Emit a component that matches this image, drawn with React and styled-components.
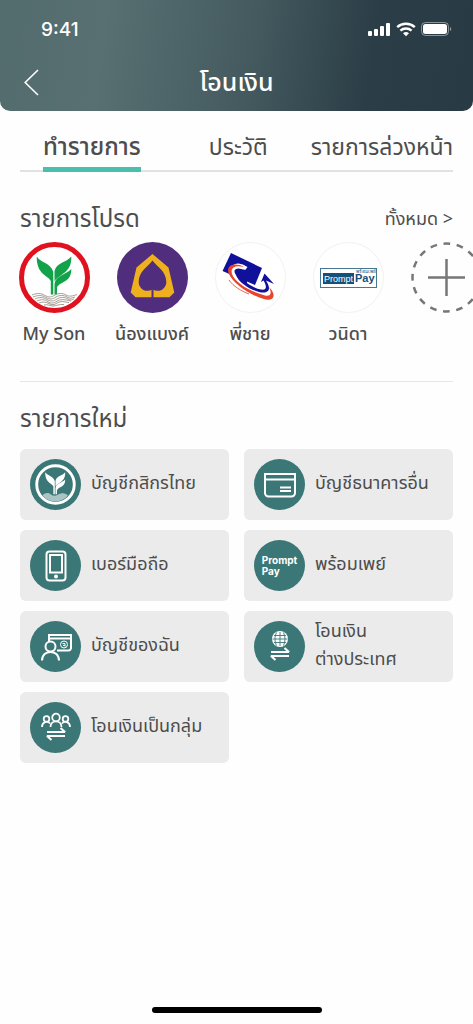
import React from 'react';
import styled, { createGlobalStyle, css } from 'styled-components';

const GlobalStyle = createGlobalStyle`
  *, *::before, *::after {
    box-sizing: border-box;
  }

  body {
    margin: 0;
    color: #4d4d4d;
    background-color: #fefefe;
    font-family: 'Noto Sans Thai', 'Noto Sans', sans-serif;
  }

  button {
    padding: 0;
    color: inherit;
    font-family: inherit;
    background: none;
    border: 0;
    cursor: pointer;
  }

  svg {
    display: block;
    flex: none;
  }
`;

const Screen = styled.div`
  display: flex;
  flex-direction: column;
  min-height: 100vh;
  overflow-x: hidden;
`;

const Header = styled.header`
  color: #fff;
  background: linear-gradient(98deg, #526b6d 0%, #587072 22%, #43595e 54%, #2b3d46 78%, #283a43 100%);
  border-radius: 0 0 10px 10px;
`;

const StatusBar = styled.div`
  display: flex;
  align-items: center;
  justify-content: space-between;
  height: 58px;
  padding: 0 20px 0 41px;
`;

const Clock = styled.time`
  font-family: Inter, sans-serif;
  font-size: 19px;
  font-weight: 500;
`;

const TitleBar = styled.div`
  display: grid;
  grid-template-columns: 1fr auto 1fr;
  align-items: center;
  height: 53px;
  padding: 0 24px 4px;
`;

const Title = styled.h1`
  margin: 0;
  font-size: 25px;
  font-weight: 500;
  line-height: 32px;
`;

const Main = styled.main`
  flex: 1;
  padding: 20px 20px 0;
`;

const Tabs = styled.nav`
  display: flex;
  gap: 43px;
  height: 41px;
  padding-left: 23px;
  border-bottom: 2px solid #e2e2e2;
`;

const Tab = styled.button`
  height: 41px;
  padding-bottom: 3px;
  font-size: 23px;
  line-height: 32px;
  white-space: nowrap;
  border-bottom: 5px solid transparent;

  ${({ $active }) => $active && css`
    margin-right: auto;
    font-size: 24px;
    font-weight: 500;
    border-color: #4bbfae;
  `}
`;

const SectionHead = styled.div`
  display: flex;
  align-items: center;
  justify-content: space-between;
  height: 32px;
`;

const SectionTitle = styled.h2`
  margin: 0;
  font-size: 24px;
  font-weight: 400;
  line-height: 32px;
`;

const AllButton = styled.button`
  font-size: 18px;
  line-height: 32px;
`;

const Favorites = styled.section`
  padding: 32px 0 32px;
  border-bottom: 1px solid #e6e6e6;
`;

const FavoriteRow = styled.div`
  display: flex;
  gap: 18px;
  margin: 6px -20px 0 -6px;
  overflow: hidden;
`;

const Favorite = styled.button`
  display: flex;
  flex: none;
  flex-direction: column;
  gap: 8px;
  align-items: center;
  width: 80px;
  font-size: 18px;
  font-weight: 500;
  line-height: 28px;
  white-space: nowrap;
`;

const NewItems = styled.section`
  padding-top: 22px;
`;

const CardGrid = styled.div`
  display: grid;
  grid-template-columns: 1fr 1fr;
  gap: 10px 15px;
  margin-top: 13px;
`;

const Card = styled.button`
  display: flex;
  gap: 10px;
  align-items: center;
  height: 71px;
  padding: 0 10px;
  font-size: 18px;
  line-height: 28px;
  text-align: left;
  white-space: pre-line;
  background-color: #ebebeb;
  border-radius: 6px;
`;

const CardLabel = styled.span`
  padding-bottom: 2px;
`;

const CardIcon = styled.span`
  display: flex;
  flex: none;
  align-items: center;
  justify-content: center;
  width: 51px;
  height: 51px;
  color: #fff;
  background-color: #3b7776;
  border-radius: 50%;
`;

const PromptPayText = styled.span`
  font-family: Inter, sans-serif;
  font-size: 10px;
  font-weight: 700;
  line-height: 11px;
`;

const HomeIndicator = styled.div`
  width: 170px;
  height: 6px;
  margin: 0 auto 11px;
  background-color: #000;
  border-radius: 3px;
`;

const StatusIcons = () => (
  <svg width="86" height="16" viewBox="0 0 86 16" fill="#fff" aria-hidden="true">
    <rect x="1" y="10" width="4" height="5" rx="1" />
    <rect x="7" y="8" width="4" height="7" rx="1" />
    <rect x="13" y="5" width="4" height="10" rx="1" />
    <rect x="19" y="2" width="4" height="13" rx="1" />
    <g fill="none" stroke="#fff" strokeWidth="2.4">
      <path d="M30.2 6.2a13 13 0 0 1 17.6 0" />
      <path d="M33.4 9.6a8.4 8.4 0 0 1 11.2 0" />
    </g>
    <path d="M36 12.2a4.6 4.6 0 0 1 6 0L39 15.2z" />
    <rect x="54.5" y="1.5" width="27" height="13" rx="4" fill="none" stroke="#fff" strokeOpacity=".45" />
    <rect x="56" y="3" width="24" height="10" rx="2.5" />
    <path d="M83 6a2.2 2.2 0 0 1 0 4z" opacity=".5" />
  </svg>
);

const BackIcon = () => (
  <svg width="15" height="27" viewBox="0 0 15 27" fill="none" stroke="#fff" strokeWidth="1.6" aria-hidden="true">
    <path d="M14 1 1.2 13.5 14 26" />
  </svg>
);

const Leaves = () => (
  <>
    <path d="M17.7 14.5C22 21 32 21 34.3 30V52.5H31.8V39C29 33 17.500 33 17.7 14.5z" />
    <path d="M52.3 14.5C47 21 38 20 35.5 29V39.500C39 32 53 32 52.3 14.5z" />
    <path d="M52.3 27C47 33 36.500 33 35.5 42V52.5H38V45.500C41 39 52.5 41 52.3 27z" />
  </>
);

const KBankLogo = () => (
  <svg width="71" height="71" viewBox="0 0 71 71" aria-hidden="true">
    <circle cx="35.5" cy="35.5" r="33" fill="#fff" stroke="#e0121f" strokeWidth="5" />
    <g fill="#12a34a"><Leaves /></g>
    <g fill="none" stroke="#9c9186" strokeWidth=".9">
      <path d="M13 53c5-2 9-2 13 .5s7 1.500 10-.5 8-2 11 0 7 1 11-.5" />
      <path d="M14 55c5-2 9-2 13 .5s7 1.500 10-.5 8-2 11 0 5 1 8 0" />
      <path d="M16 57c4-2 8-2 12 .5s7 1.500 10-.5 8-2 11 0 4 .5 6 0" />
      <path d="M18 59c4-2 8-1.500 11 .7s6 1.500 9-.5 7-2 14-.2" />
      <path d="M20 61c4-1.500 7-1 10 .6s5 1.500 8-.6 7-1.500 12-.4" />
      <path d="M25 63c4-1 6 1 9 1s6-2 11-1.500" />
    </g>
  </svg>
);

const BangkokBankLogo = () => (
  <svg width="71" height="71" viewBox="0 0 71 71" aria-hidden="true">
    <circle cx="35.5" cy="35.5" r="35.5" fill="#512d7e" />
    <path
      fill="#eeb01f"
      fillRule="evenodd"
      d="M35.5 12 51.5 25.5 57.3 50.5 52.5 55.3H36.5v-7.5h-2v7.5H18.5L13.7 50.5 19.5 25.5zM35.5 18.5C31 25 21.7 29 21.7 40c0 7 7 11 13.8 7.5 6.8 3.5 13.8-.5 13.8-7.5 0-11-9.3-15-13.8-21.5z"
    />
  </svg>
);

const CarrierLogo = () => (
  <svg width="71" height="71" viewBox="0 0 71 71" aria-hidden="true">
    <circle cx="35.5" cy="35.5" r="35" fill="#fff" stroke="#f1f1f1" />
    <path fill="#10109a" d="M16 11 47 26 40 43 7.500 29z" />
    <path d="M31 27C23 21 14 25 18 33 23 42 36 48 48 52" fill="none" stroke="#fff" strokeWidth="5" />
    <path fill="#e8432d" d="M29 25C20 20 11 23 13.500 31 18 42 36 54 51 57.500 60 59 61 52 54 45 57 51 56 54.500 50 53.500 36 50 20 41 17 32 15 25 21 23 29 25z" />
    <path fill="#10109a" d="M33 29C26 26 20 28 21 33 24 41 35 48 46 50.500 55 51.500 56 46 51 38.500L59 42 49.500 31.500 46 40 48.500 38.500C52 44 52 48.500 46 47.500 41 46.500 36 44 32 41z" />
    <path d="M14 38C18 44 26 49 34 52" fill="none" stroke="#e8432d" strokeWidth=".8" />
  </svg>
);

const PromptPayLogo = () => (
  <svg width="71" height="71" viewBox="0 0 71 71" fontFamily="Liberation Sans, sans-serif" aria-hidden="true">
    <circle cx="35.5" cy="35.5" r="35" fill="#fff" stroke="#f1f1f1" />
    <rect x="7.5" y="26.5" width="56" height="19" fill="#fff" stroke="#477792" />
    <rect x="10" y="31" width="31" height="11" fill="#14507a" />
    <text x="11" y="40" fontSize="9" fill="#fff">Prompt</text>
    <text x="42" y="40" fontSize="11" fontWeight="700" fill="#14507a">Pay</text>
    <text x="43" y="31" fontSize="5" fill="#14507a">พร้อมเพย์</text>
  </svg>
);

const AddIcon = () => (
  <svg width="71" height="71" viewBox="0 0 71 71" fill="none" stroke="#777" aria-hidden="true">
    <circle cx="35.5" cy="35.5" r="34" strokeWidth="2.5" strokeDasharray="6.7 6.653" strokeDashoffset="3.3" />
    <path d="M35.5 17v37M17 35.5h37" strokeWidth="2.5" />
  </svg>
);

const KBankIcon = () => (
  <svg width="41" height="41" viewBox="0 0 71 71" aria-hidden="true">
    <circle cx="35.5" cy="35.5" r="32.5" fill="none" stroke="#fff" strokeWidth="5" />
    <g fill="#fff"><Leaves /></g>
    <path d="M13 54c5-5 11-5 15-1s10 1 14-1 9-2 15 2c-10 14-34 14-44 0z" fill="#a9c4c4" />
  </svg>
);

const CardOutlineIcon = () => (
  <svg width="32" height="26" viewBox="0 0 32 26" fill="none" stroke="#fff" strokeWidth="2" aria-hidden="true">
    <path d="M1 2h30v19a3.5 3.5 0 0 1-3.5 3.5h-23A3.5 3.5 0 0 1 1 21zM1 7.5h30M16 15.5h11M16 19h11" />
  </svg>
);

const PhoneIcon = () => (
  <svg width="22" height="32" viewBox="0 0 22 32" fill="none" stroke="#fff" strokeWidth="2" aria-hidden="true">
    <rect x="1.5" y="1.5" width="19" height="29" rx="3" />
    <rect x="5" y="5" width="12" height="17.5" />
    <circle cx="11" cy="26.5" r="2" fill="#fff" stroke="none" />
  </svg>
);

const MyAccountIcon = () => (
  <svg width="32" height="28" viewBox="0 0 32 28" fill="none" stroke="#fff" strokeWidth="2" aria-hidden="true">
    <path d="M9 8V2h22v13a2.5 2.5 0 0 1-2.5 2.5H17M9 5.5h22" />
    <circle cx="10.5" cy="13.5" r="5" />
    <path d="M2 27.5c0-11.5 17-11.5 17 0" />
    <g strokeWidth="1">
      <circle cx="24" cy="11.5" r="3.5" />
      <path d="M22.5 10.5h2.5v3M23 12.5h2" />
    </g>
  </svg>
);

const TransferArrows = ({ y }) => (
  <path
    d={`M6 ${y + 5}h18l-4.500-4M24 ${y + 9}H6l4.500 4`}
    fill="none"
    stroke="#fff"
    strokeWidth="2"
    strokeLinejoin="bevel"
  />
);

const GlobeTransferIcon = () => (
  <svg width="30" height="34" viewBox="0 0 30 34" aria-hidden="true">
    <circle cx="15" cy="9" r="8" fill="#fff" />
    <path
      d="M15 2v14M7.5 9h15M9 5.5h12M9 12.5h12M11.5 2.5c-2 4-2 9 0 13M18.5 2.5c2 4 2 9 0 13"
      fill="none"
      stroke="#3b7776"
      strokeWidth=".9"
    />
    <TransferArrows y={17} />
  </svg>
);

const GroupTransferIcon = () => (
  <svg width="30" height="31" viewBox="0 0 30 31" fill="none" stroke="#fff" strokeWidth="1.8" aria-hidden="true">
    <circle cx="15" cy="5.5" r="3.8" />
    <circle cx="5.5" cy="7" r="2.8" />
    <circle cx="24.5" cy="7" r="2.8" />
    <path d="M9.5 15c0-7.5 11-7.5 11 0M1 15c0-5 5-7 8-3.5M29 15c0-5-5-7-8-3.5" />
    <TransferArrows y={15} />
  </svg>
);

const favorites = [
  { name: 'My Son', logo: <KBankLogo /> },
  { name: 'น้องแบงค์', logo: <BangkokBankLogo /> },
  { name: 'พี่ชาย', logo: <CarrierLogo /> },
  { name: 'วนิดา', logo: <PromptPayLogo /> }
];

const newItems = [
  { label: 'บัญชีกสิกรไทย', icon: <KBankIcon /> },
  { label: 'บัญชีธนาคารอื่น', icon: <CardOutlineIcon /> },
  { label: 'เบอร์มือถือ', icon: <PhoneIcon /> },
  { label: 'พร้อมเพย์', icon: <PromptPayText>Prompt<br />Pay</PromptPayText> },
  { label: 'บัญชีของฉัน', icon: <MyAccountIcon /> },
  { label: 'โอนเงิน\nต่างประเทศ', icon: <GlobeTransferIcon /> },
  { label: 'โอนเงินเป็นกลุ่ม', icon: <GroupTransferIcon /> }
];

const App = () => (
  <Screen>
    <GlobalStyle />
    <Header>
      <StatusBar>
        <Clock>9:41</Clock>
        <StatusIcons />
      </StatusBar>
      <TitleBar>
        <button type="button" aria-label="ย้อนกลับ"><BackIcon /></button>
        <Title>โอนเงิน</Title>
      </TitleBar>
    </Header>
    <Main>
      <Tabs>
        <Tab type="button" $active>ทำรายการ</Tab>
        <Tab type="button">ประวัติ</Tab>
        <Tab type="button">รายการล่วงหน้า</Tab>
      </Tabs>
      <Favorites>
        <SectionHead>
          <SectionTitle>รายการโปรด</SectionTitle>
          <AllButton type="button">ทั้งหมด &gt;</AllButton>
        </SectionHead>
        <FavoriteRow>
          {favorites.map(({ name, logo }) => (
            <Favorite key={name} type="button">
              {logo}
              {name}
            </Favorite>
          ))}
          <Favorite type="button" aria-label="เพิ่มรายการโปรด"><AddIcon /></Favorite>
        </FavoriteRow>
      </Favorites>
      <NewItems>
        <SectionTitle>รายการใหม่</SectionTitle>
        <CardGrid>
          {newItems.map(({ label, icon }) => (
            <Card key={label} type="button">
              <CardIcon>{icon}</CardIcon>
              <CardLabel>{label}</CardLabel>
            </Card>
          ))}
        </CardGrid>
      </NewItems>
    </Main>
    <HomeIndicator />
  </Screen>
);

export default App;
